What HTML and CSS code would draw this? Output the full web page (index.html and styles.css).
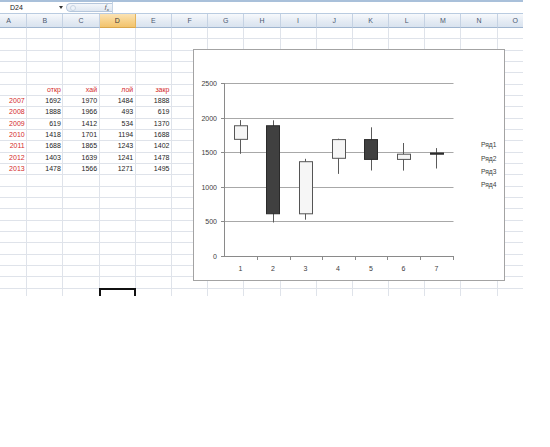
FILE: index.html
```html
<!DOCTYPE html>
<html>
<head>
<meta charset="utf-8">
<link rel="stylesheet" href="styles.css">
</head>
<body>
<div class="app">
  <div class="fbar">
    <div class="namebox"><span class="nb-text">D24</span><span class="dd"></span></div>
    <div class="fxpill"><span class="circ"></span><span class="fx">f<sub>x</sub></span></div>
    <div class="finput"></div>
  </div>
  <div class="sheet">
    <div class="heads">
      <i>A</i><i>B</i><i>C</i><i class="hsel">D</i><i>E</i><i>F</i><i>G</i><i>H</i><i>I</i><i>J</i><i>K</i><i>L</i><i>M</i><i>N</i><i>O</i>
    </div>
    <!-- rows 1-5 -->
    <div class="row"><i></i><i></i><i></i><i></i><i></i><i></i><i></i><i></i><i></i><i></i><i></i><i></i><i></i><i></i><i></i></div>
    <div class="row"><i></i><i></i><i></i><i></i><i></i><i></i><i></i><i></i><i></i><i></i><i></i><i></i><i></i><i></i><i></i></div>
    <div class="row"><i></i><i></i><i></i><i></i><i></i><i></i><i></i><i></i><i></i><i></i><i></i><i></i><i></i><i></i><i></i></div>
    <div class="row"><i></i><i></i><i></i><i></i><i></i><i></i><i></i><i></i><i></i><i></i><i></i><i></i><i></i><i></i><i></i></div>
    <div class="row"><i></i><i></i><i></i><i></i><i></i><i></i><i></i><i></i><i></i><i></i><i></i><i></i><i></i><i></i><i></i></div>
    <!-- row 6 -->
    <div class="row"><i></i><i class="red">откр</i><i class="red">хай</i><i class="red">лой</i><i class="red">закр</i><i></i><i></i><i></i><i></i><i></i><i></i><i></i><i></i><i></i><i></i></div>
    <!-- rows 7-13 -->
    <div class="row"><i class="red">2007</i><i>1692</i><i>1970</i><i>1484</i><i>1888</i><i></i><i></i><i></i><i></i><i></i><i></i><i></i><i></i><i></i><i></i></div>
    <div class="row"><i class="red">2008</i><i>1888</i><i>1966</i><i>493</i><i>619</i><i></i><i></i><i></i><i></i><i></i><i></i><i></i><i></i><i></i><i></i></div>
    <div class="row"><i class="red">2009</i><i>619</i><i>1412</i><i>534</i><i>1370</i><i></i><i></i><i></i><i></i><i></i><i></i><i></i><i></i><i></i><i></i></div>
    <div class="row"><i class="red">2010</i><i>1418</i><i>1701</i><i>1194</i><i>1688</i><i></i><i></i><i></i><i></i><i></i><i></i><i></i><i></i><i></i><i></i></div>
    <div class="row"><i class="red">2011</i><i>1688</i><i>1865</i><i>1243</i><i>1402</i><i></i><i></i><i></i><i></i><i></i><i></i><i></i><i></i><i></i><i></i></div>
    <div class="row"><i class="red">2012</i><i>1403</i><i>1639</i><i>1241</i><i>1478</i><i></i><i></i><i></i><i></i><i></i><i></i><i></i><i></i><i></i><i></i></div>
    <div class="row"><i class="red">2013</i><i>1478</i><i>1566</i><i>1271</i><i>1495</i><i></i><i></i><i></i><i></i><i></i><i></i><i></i><i></i><i></i><i></i></div>
    <!-- rows 14-23 -->
    <div class="row"><i></i><i></i><i></i><i></i><i></i><i></i><i></i><i></i><i></i><i></i><i></i><i></i><i></i><i></i><i></i></div>
    <div class="row"><i></i><i></i><i></i><i></i><i></i><i></i><i></i><i></i><i></i><i></i><i></i><i></i><i></i><i></i><i></i></div>
    <div class="row"><i></i><i></i><i></i><i></i><i></i><i></i><i></i><i></i><i></i><i></i><i></i><i></i><i></i><i></i><i></i></div>
    <div class="row"><i></i><i></i><i></i><i></i><i></i><i></i><i></i><i></i><i></i><i></i><i></i><i></i><i></i><i></i><i></i></div>
    <div class="row"><i></i><i></i><i></i><i></i><i></i><i></i><i></i><i></i><i></i><i></i><i></i><i></i><i></i><i></i><i></i></div>
    <div class="row"><i></i><i></i><i></i><i></i><i></i><i></i><i></i><i></i><i></i><i></i><i></i><i></i><i></i><i></i><i></i></div>
    <div class="row"><i></i><i></i><i></i><i></i><i></i><i></i><i></i><i></i><i></i><i></i><i></i><i></i><i></i><i></i><i></i></div>
    <div class="row"><i></i><i></i><i></i><i></i><i></i><i></i><i></i><i></i><i></i><i></i><i></i><i></i><i></i><i></i><i></i></div>
    <div class="row"><i></i><i></i><i></i><i></i><i></i><i></i><i></i><i></i><i></i><i></i><i></i><i></i><i></i><i></i><i></i></div>
    <div class="row"><i></i><i></i><i></i><i></i><i></i><i></i><i></i><i></i><i></i><i></i><i></i><i></i><i></i><i></i><i></i></div>
    <!-- row 24 -->
    <div class="row"><i></i><i></i><i></i><i class="sel"></i><i></i><i></i><i></i><i></i><i></i><i></i><i></i><i></i><i></i><i></i><i></i></div>
  </div>

  <div class="chart">
    <svg width="310" height="230" viewBox="194 50 310 230" xmlns="http://www.w3.org/2000/svg">
      <g class="grid">
        <line x1="224" y1="83.5" x2="453.5" y2="83.5"/>
        <line x1="224" y1="118.5" x2="453.5" y2="118.5"/>
        <line x1="224" y1="152.5" x2="453.5" y2="152.5"/>
        <line x1="224" y1="187.5" x2="453.5" y2="187.5"/>
        <line x1="224" y1="221.5" x2="453.5" y2="221.5"/>
      </g>
      <g class="axis">
        <line x1="224.5" y1="83" x2="224.5" y2="257"/>
        <line x1="224" y1="256.5" x2="453.5" y2="256.5"/>
        <line x1="221" y1="83.5" x2="224" y2="83.5"/>
        <line x1="221" y1="118.5" x2="224" y2="118.5"/>
        <line x1="221" y1="152.5" x2="224" y2="152.5"/>
        <line x1="221" y1="187.5" x2="224" y2="187.5"/>
        <line x1="221" y1="221.5" x2="224" y2="221.5"/>
        <line x1="221" y1="256.5" x2="224" y2="256.5"/>
        <line x1="257.5" y1="256" x2="257.5" y2="260"/>
        <line x1="290.5" y1="256" x2="290.5" y2="260"/>
        <line x1="322.5" y1="256" x2="322.5" y2="260"/>
        <line x1="355.5" y1="256" x2="355.5" y2="260"/>
        <line x1="387.5" y1="256" x2="387.5" y2="260"/>
        <line x1="420.5" y1="256" x2="420.5" y2="260"/>
        <line x1="453.5" y1="256" x2="453.5" y2="260"/>
      </g>
      <g class="ylab">
        <text x="217" y="86">2500</text>
        <text x="217" y="121">2000</text>
        <text x="217" y="155">1500</text>
        <text x="217" y="190">1000</text>
        <text x="217" y="224">500</text>
        <text x="217" y="259">0</text>
      </g>
      <g class="xlab">
        <text x="240.5" y="270.5">1</text>
        <text x="273" y="270.5">2</text>
        <text x="305.5" y="270.5">3</text>
        <text x="338" y="270.5">4</text>
        <text x="371" y="270.5">5</text>
        <text x="403.5" y="270.5">6</text>
        <text x="436.5" y="270.5">7</text>
      </g>
      <g class="wick">
        <line x1="240.5" y1="120.1" x2="240.5" y2="153.8"/>
        <line x1="273.5" y1="120.3" x2="273.5" y2="222.5"/>
        <line x1="305.5" y1="158.8" x2="305.5" y2="219.7"/>
        <line x1="338.5" y1="138.7" x2="338.5" y2="173.9"/>
        <line x1="371.5" y1="127.3" x2="371.5" y2="170.5"/>
        <line x1="403.5" y1="143" x2="403.5" y2="170.6"/>
        <line x1="436.5" y1="148.1" x2="436.5" y2="168.5"/>
      </g>
      <g>
        <rect class="up" x="234.5" y="125.75" width="13" height="13.6"/>
        <rect class="down" x="266.5" y="125.75" width="13" height="88"/>
        <rect class="up" x="299.5" y="161.7" width="13" height="52.1"/>
        <rect class="up" x="332.5" y="139.6" width="13" height="18.7"/>
        <rect class="down" x="364.5" y="139.6" width="13" height="19.8"/>
        <rect class="up" x="397.5" y="154.2" width="13" height="5.2"/>
        <rect class="down" x="430.5" y="153" width="13" height="1.2"/>
      </g>
      <g class="legend">
        <text x="481" y="146.8">Ряд1</text>
        <text x="481" y="160.6">Ряд2</text>
        <text x="481" y="174">Ряд3</text>
        <text x="481" y="187.3">Ряд4</text>
      </g>
    </svg>
  </div>
</div>
</body>
</html>
```

FILE: styles.css
```css
html, body {
  margin: 0;
  padding: 0;
  background: #ffffff;
}

.app {
  position: relative;
  width: 550px;
  height: 447px;
  font-family: "Liberation Sans", Arial, sans-serif;
  font-size: 7px;
  color: #1e1e1e;
}

/* formula bar */
.fbar {
  box-sizing: border-box;
  width: 523px;
  height: 14px;
  border-top: 2px solid #a9c0da;
  border-bottom: 1px solid #b9cbe0;
  display: flex;
  align-items: stretch;
  background: #ffffff;
}

.namebox {
  width: 66px;
  display: flex;
  align-items: center;
  justify-content: space-between;
  padding: 0 3px 0 10px;
  box-sizing: border-box;
}

.nb-text {
  font-size: 7px;
  color: #222;
}

.dd {
  width: 0;
  height: 0;
  border-left: 2.5px solid transparent;
  border-right: 2.5px solid transparent;
  border-top: 3px solid #333;
}

.fxpill {
  width: 46px;
  margin: 1px 0;
  border: 1px solid #b6c7dc;
  border-right: none;
  border-radius: 5px 0 0 5px;
  background: linear-gradient(#f3f6fa, #dfe7f1);
  display: flex;
  align-items: center;
  justify-content: space-between;
  padding: 0 3px 0 3px;
  box-sizing: border-box;
}

.circ {
  width: 6px;
  height: 6px;
  border-radius: 50%;
  border: 1px solid #c9d5e4;
  background: #eef3f9;
  box-sizing: border-box;
}

.fx {
  font-family: "Liberation Serif", "Times New Roman", serif;
  font-style: italic;
  font-size: 7px;
  color: #444;
}

.fx sub {
  font-size: 5px;
}

.finput {
  flex: 1;
  border-left: 1px solid #c6d4e4;
}

/* sheet grid */
.sheet {
  width: 523px;
  height: 282px;
  overflow: hidden;
}

.heads,
.row {
  display: grid;
  grid-template-columns: repeat(15, 36.2px);
  margin-left: -9px;
  width: 543px;
}

.heads {
  height: 14px;
}

.heads i {
  font-style: normal;
  box-sizing: border-box;
  border-right: 1px solid #c5d2e3;
  border-bottom: 1px solid #9fb5cf;
  background: linear-gradient(#f7f9fc, #e3eaf3 60%, #d9e3ef);
  color: #4b5870;
  text-align: center;
  line-height: 13px;
  font-size: 7px;
}

.heads i.hsel {
  background: linear-gradient(#fbe3b4, #f6cf86 60%, #f2c36c);
  border-right-color: #e4b45c;
  border-bottom-color: #d9a74d;
  color: #3a3a3a;
}

.row {
  height: 11.33px;
}

.row i {
  font-style: normal;
  box-sizing: border-box;
  border-right: 1px solid #dfe3ea;
  border-bottom: 1px solid #dfe3ea;
  text-align: right;
  padding-right: 1.5px;
  line-height: 9px;
  font-size: 7px;
  color: #1e1e1e;
  white-space: nowrap;
  overflow: hidden;
}

.row i.red {
  color: #d42a2a;
}

.row i.sel {
  position: relative;
  overflow: visible;
}

.row i.sel::after {
  content: "";
  position: absolute;
  left: -1px;
  top: -1px;
  right: -1px;
  bottom: -2px;
  border: 2px solid #111;
}

/* chart overlay */
.chart {
  position: absolute;
  left: 193px;
  top: 49px;
  width: 310px;
  height: 230px;
  border: 1px solid #a3a3a3;
  background: #ffffff;
}

.chart svg {
  display: block;
}

.grid line {
  stroke: #a8a8a8;
  stroke-width: 1;
}

.axis line {
  stroke: #8a8a8a;
  stroke-width: 1;
}

.ylab text {
  font-family: "Liberation Sans", Arial, sans-serif;
  font-size: 7px;
  fill: #404040;
  text-anchor: end;
}

.xlab text {
  font-family: "Liberation Sans", Arial, sans-serif;
  font-size: 7px;
  fill: #404040;
  text-anchor: middle;
}

.legend text {
  font-family: "Liberation Sans", Arial, sans-serif;
  font-size: 6.7px;
  fill: #404040;
}

.wick line {
  stroke: #5a5a5a;
  stroke-width: 1;
}

rect.up {
  fill: #f6f6f6;
  stroke: #555555;
  stroke-width: 1;
}

rect.down {
  fill: #404040;
  stroke: #2a2a2a;
  stroke-width: 1;
}
```
